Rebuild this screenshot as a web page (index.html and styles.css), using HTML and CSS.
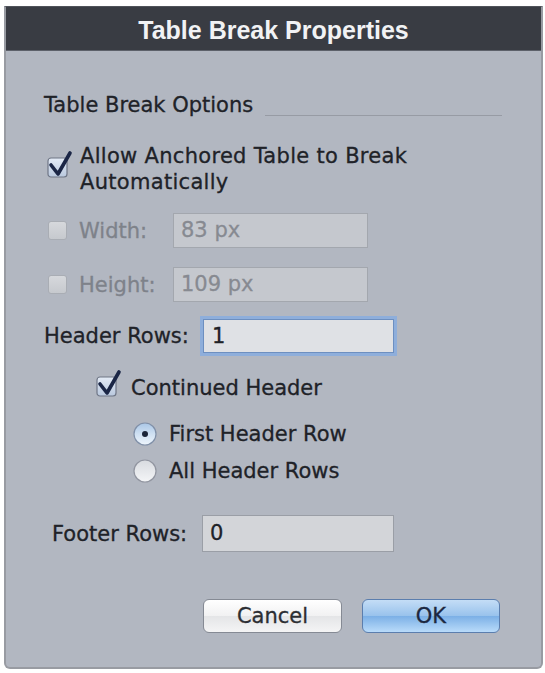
FILE: index.html
```html
<html lang="en">
  <head>
    <meta charset="UTF-8" />
    <meta name="viewport" content="width=device-width, initial-scale=1.0" />
    <title>Table Break Properties</title>
    <link rel="stylesheet" href="styles.css">
  </head>
  <body>
    <div class="dialog">
      <div class="title-bar">Table Break Properties</div>

      <div class="content">
        <div class="section">
          <div class="section-label">Table Break Options</div>
          <div class="section-rule"></div>
        </div>

        <div class="check-row allow-row">
          <svg class="checkbox" width="26" height="26" viewBox="0 0 26 26">
            <defs>
              <linearGradient id="cbOn" x1="0" y1="0" x2="0" y2="1">
                <stop offset="0" stop-color="#e4ebf6" />
                <stop offset="1" stop-color="#b9c8de" />
              </linearGradient>
            </defs>
            <rect x="1" y="6" width="19" height="19" rx="3" fill="url(#cbOn)" stroke="#6f7686" stroke-width="1.2" />
            <path d="M4 13 L11 22 L23 1" fill="none" stroke="#1b2646" stroke-width="3.6" stroke-linecap="round" stroke-linejoin="round" />
          </svg>
          <div class="check-text">Allow Anchored Table to Break<br>Automatically</div>
        </div>

        <div class="field-row size-row first-size">
          <span class="box-off"></span>
          <span class="size-label">Width:</span>
          <div class="input disabled">83 px</div>
        </div>

        <div class="field-row size-row">
          <span class="box-off"></span>
          <span class="size-label">Height:</span>
          <div class="input disabled">109 px</div>
        </div>

        <div class="field-row header-row">
          <span class="rows-label">Header Rows:</span>
          <div class="input focused">1</div>
        </div>

        <div class="check-row continued-row">
          <svg class="checkbox" width="26" height="26" viewBox="0 0 26 26">
            <defs>
              <linearGradient id="cbOn2" x1="0" y1="0" x2="0" y2="1">
                <stop offset="0" stop-color="#e4ebf6" />
                <stop offset="1" stop-color="#b9c8de" />
              </linearGradient>
            </defs>
            <rect x="1" y="6" width="19" height="19" rx="3" fill="url(#cbOn2)" stroke="#6f7686" stroke-width="1.2" />
            <path d="M4 13 L11 22 L23 1" fill="none" stroke="#1b2646" stroke-width="3.6" stroke-linecap="round" stroke-linejoin="round" />
          </svg>
          <div class="check-text">Continued Header</div>
        </div>

        <div class="radio-row first-radio">
          <svg class="radio" width="24" height="24" viewBox="0 0 24 24">
            <defs>
              <linearGradient id="rOn" x1="0" y1="0" x2="0" y2="1">
                <stop offset="0" stop-color="#a9c6e6" />
                <stop offset="0.5" stop-color="#cfe0f2" />
                <stop offset="1" stop-color="#eef5fc" />
              </linearGradient>
            </defs>
            <circle cx="12" cy="12" r="11" fill="url(#rOn)" stroke="#8090a8" stroke-width="1.2" />
            <circle cx="12" cy="12" r="3" fill="#1b2438" />
          </svg>
          <span>First Header Row</span>
        </div>

        <div class="radio-row">
          <svg class="radio" width="24" height="24" viewBox="0 0 24 24">
            <defs>
              <linearGradient id="rOff" x1="0" y1="0" x2="0" y2="1">
                <stop offset="0" stop-color="#d8dbe0" />
                <stop offset="1" stop-color="#f4f5f7" />
              </linearGradient>
            </defs>
            <circle cx="12" cy="12" r="11" fill="url(#rOff)" stroke="#9195a0" stroke-width="1.2" />
          </svg>
          <span>All Header Rows</span>
        </div>

        <div class="field-row footer-row">
          <span class="rows-label">Footer Rows:</span>
          <div class="input plain">0</div>
        </div>

        <div class="buttons">
          <div class="button cancel">Cancel</div>
          <div class="button ok">OK</div>
        </div>
      </div>
    </div>
  </body>
</html>
```

FILE: styles.css
```css
body {
  margin: 0;
  background-color: #ffffff;
  font-family: "DejaVu Sans", "Liberation Sans", sans-serif;
  color: #202228;
}
.dialog {
  margin: 6px 2px 0 4px;
  height: 663px;
  box-sizing: border-box;
  background-color: #b2b7c1;
  border: 2px solid #989ba2;
  border-top: 1px solid #50535a;
  border-radius: 0 0 6px 6px;
}
.title-bar {
  height: 43px;
  line-height: 46px;
  background-color: #393c43;
  border-bottom: 1px solid #5d616a;
  color: #f1f2f4;
  text-align: center;
  font-family: "Liberation Sans", sans-serif;
  font-weight: bold;
  font-size: 25px;
}
.content {
  padding: 0 39px 0 38px;
  font-size: 21px;
  line-height: 26px;
  -webkit-text-stroke: 0.3px currentColor;
}
.section {
  display: flex;
  margin-top: 41px;
}
.section-rule {
  flex: 1;
  align-self: flex-end;
  margin: 0 0 2px 12px;
  border-top: 1px solid #979ba4;
}
.check-row {
  display: flex;
  align-items: flex-start;
}
.allow-row {
  margin-top: 25px;
  padding-left: 3px;
}
.allow-row .checkbox {
  margin-top: 9px;
}
.allow-row .check-text {
  letter-spacing: 0.3px;
}
.checkbox {
  overflow: visible;
  flex-shrink: 0;
}
.check-text {
  margin-left: 7px;
}
.field-row {
  display: flex;
  align-items: center;
}
.size-row {
  margin-top: 19px;
  padding-left: 4px;
  color: #7e828a;
}
.first-size {
  margin-top: 18px;
}
.box-off {
  width: 17px;
  height: 17px;
  border: 1px solid #a9adb4;
  border-radius: 3px;
  background: linear-gradient(#d6d8dc, #c6c9ce);
  flex-shrink: 0;
}
.size-label {
  width: 94px;
  margin-left: 12px;
}
.input {
  box-sizing: border-box;
  height: 35px;
  line-height: 33px;
  padding-left: 7px;
  border: 1px solid #959aa3;
}
.input.disabled {
  width: 195px;
  background-color: #c5c8ce;
  border-color: #a3a7ae;
  color: #878a91;
}
.header-row {
  margin-top: 17px;
}
.rows-label {
  width: 159px;
}
.input.focused {
  width: 191px;
  height: 34px;
  line-height: 32px;
  background-color: #dfe1e5;
  border-color: #6d8fc0;
  box-shadow: 0 0 0 3px #8eaedb;
  padding-left: 8px;
}
.continued-row {
  margin-top: 22px;
  padding-left: 52px;
}
.continued-row .checkbox {
  margin-top: -4px;
}
.continued-row .check-text {
  margin-left: 9px;
}
.radio-row {
  display: flex;
  align-items: center;
  padding-left: 89px;
}
.first-radio {
  margin-top: 20px;
}
.radio-row + .radio-row {
  margin-top: 11px;
}
.radio {
  margin-right: 12px;
}
.footer-row {
  margin-top: 31px;
  padding-left: 8px;
}
.footer-row .rows-label {
  width: 150px;
}
.input.plain {
  width: 192px;
  height: 37px;
  line-height: 35px;
  background-color: #d3d5d9;
  border-color: #9a9ea6;
}
.buttons {
  display: flex;
  justify-content: flex-end;
  gap: 20px;
  margin-top: 47px;
  padding-right: 2px;
}
.button {
  box-sizing: border-box;
  width: 138px;
  height: 34px;
  line-height: 32px;
  text-align: center;
  border-radius: 6px;
  border: 1px solid #858a94;
}
.cancel {
  width: 139px;
  background: linear-gradient(#ffffff, #f1f1f2 50%, #e4e5e7 51%, #f4f4f5);
  color: #2c2e33;
}
.ok {
  background: linear-gradient(#c4ddf6, #98c2ec 50%, #7cb0e6 51%, #b9dbfa);
  border-color: #5b7eae;
  color: #1c2840;
}
```
